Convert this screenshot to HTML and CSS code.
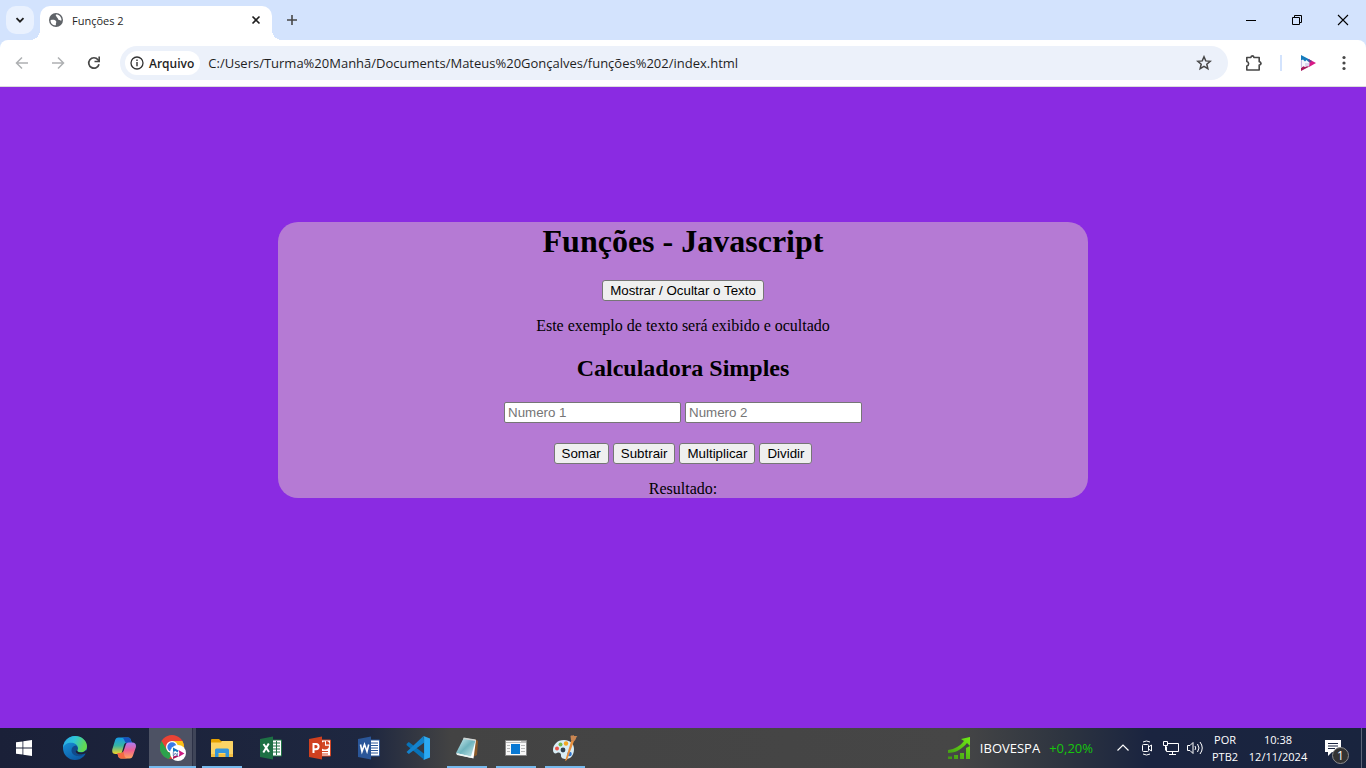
FILE: index.html
```html
<!DOCTYPE html>
<html lang="pt-BR">
<head>
<meta charset="utf-8">
<title>Funções 2</title>
<link rel="stylesheet" href="styles.css">
</head>
<body>
<header class="browser">
  <div class="tabstrip">
    <button class="tab-search" aria-label="Pesquisar guias"><svg width="10" height="10" viewBox="0 0 10 10"><path d="M1.5 3.2 5 6.7 8.500 3.200" fill="none" stroke="#1f1f1f" stroke-width="1.800"/></svg></button>
    <div class="tab">
      <svg width="16" height="16" viewBox="0 0 16 16"><circle cx="8" cy="8" r="7" fill="#5f6368"/><path d="M2.500 8.200c2-.6 4.500-.5 5.500.8s-.7 2.200 0 4.300c-3 .4-5.500-2-5.500-5.100zM8 2.600c-.9 1.700 1 1.700 1 3.200 1.400.1.300 2.300 2.500 2.100 1 .1 1.200 1 2 .6.300-3.200-2.400-6-5.500-5.900z" fill="#fff"/></svg>
      <span class="tab-title">Funções 2</span>
      <button class="tab-close" aria-label="Fechar guia"><svg width="10" height="10" viewBox="0 0 10 10"><path d="m1.500 1.500 7 7m0-7-7 7" stroke="#1f1f1f" stroke-width="1.600"/></svg></button>
    </div>
    <button class="tab-new" aria-label="Nova guia"><svg width="12" height="12" viewBox="0 0 12 12"><path d="M6 1v10M1 6h10" stroke="#474747" stroke-width="1.600"/></svg></button>
    <div class="window-controls">
      <button aria-label="Minimizar"><svg width="12" height="12" viewBox="0 0 12 12"><path d="M1 6.500h10" stroke="#000"/></svg></button>
      <button aria-label="Restaurar"><svg width="12" height="12" viewBox="0 0 12 12"><path d="M1.500 3.500h7v7h-7zM3.500 3.500v-2h7v7h-2" fill="none" stroke="#000"/></svg></button>
      <button aria-label="Fechar"><svg width="12" height="12" viewBox="0 0 12 12"><path d="m1 1 10 10M11 1 1 11" stroke="#000" stroke-width="1.100"/></svg></button>
    </div>
  </div>
  <div class="toolbar">
    <div class="nav">
      <button aria-label="Voltar" disabled><svg width="16" height="16" viewBox="0 0 16 16"><path d="M14 8H3m5-5.500L2.500 8 8 13.500" fill="none" stroke="#aeb0b2" stroke-width="1.500"/></svg></button>
      <button aria-label="Avançar" disabled><svg width="16" height="16" viewBox="0 0 16 16"><path d="M2 8h11M8 2.500 13.500 8 8 13.500" fill="none" stroke="#aeb0b2" stroke-width="1.500"/></svg></button>
      <button aria-label="Recarregar"><svg width="16" height="16" viewBox="0 0 16 16"><path d="M13 9.200A5.200 5.200 0 1 1 12 4.700l1 1.300" fill="none" stroke="#474747" stroke-width="1.700"/><path d="M14 1.500v5.800H8.500V5.800h3.900V1.500z" fill="#474747"/></svg></button>
    </div>
    <div class="omnibox">
      <button class="chip"><svg width="14" height="14" viewBox="0 0 14 14"><circle cx="7" cy="7" r="6" fill="none" stroke="#333" stroke-width="1.300"/><path d="M7 6v4.200M7 3.400v1.500" stroke="#333" stroke-width="1.400"/></svg>Arquivo</button>
      <input class="url" type="text" aria-label="Endereço" value="C:/Users/Turma%20Manhã/Documents/Mateus%20Gonçalves/funções%202/index.html">
      <button class="star" aria-label="Favoritar"><svg width="16" height="16" viewBox="0 0 16 16"><path d="m8 1.800 1.750 4.100 4.450.4-3.400 2.950 1.050 4.400L8 11.300l-3.850 2.350 1.050-4.400L1.800 6.300l4.450-.4z" fill="none" stroke="#474747" stroke-width="1.500"/></svg></button>
    </div>
    <div class="actions">
      <button aria-label="Extensões"><svg width="18" height="18" viewBox="0 0 18 18"><path d="M1.800 3.500h4.100a1.500 1.500 0 0 1 3 0h5.300v4.300a1.600 1.600 0 0 1 0 3.200v5H1.800v-4a2.300 2.300 0 0 0 0-4.500z" fill="none" stroke="#474747" stroke-width="1.600" stroke-linejoin="round"/><path d="M6 2.500a1.600 1.600 0 0 1 3.100 0zM15 7.800a1.600 1.600 0 0 1 0 3.200z" fill="#474747"/></svg></button>
      <span class="divider"></span>
      <button aria-label="Perfil"><svg width="18" height="18" viewBox="0 0 18 18"><path d="M2 1.500 16.500 9 2 17z" fill="#f4f6fc"/><path d="M2 1 10.500 5.400 9.500 8 7.500 6 6 7.500 4 5.500 2 6.500z" fill="#157bbd"/><path d="m2 17 8.500-4.400-2.500-.4-2 .8-1.500-.8-2.500 1.800z" fill="#a8165e"/><path d="m10 5.200 7 3.800-7 4 .5-4z" fill="#d71a86"/><path d="m9.500 5 3.500 1.900-2 1.600-1.500-.5z" fill="#674096"/><path d="M2.400 6.500v7M7 9v3M9 9v3" stroke="#b89edb" stroke-width=".8"/></svg></button>
      <button aria-label="Menu"><svg width="16" height="16" viewBox="0 0 16 16" fill="#474747"><circle cx="8" cy="2.500" r="1.600"/><circle cx="8" cy="8" r="1.600"/><circle cx="8" cy="13.500" r="1.600"/></svg></button>
    </div>
  </div>
</header>

<main class="page">
  <section class="card">
    <h1>Funções - Javascript</h1>
    <button class="btn">Mostrar / Ocultar o Texto</button>
    <p>Este exemplo de texto será exibido e ocultado</p>
    <h2>Calculadora Simples</h2>
    <div class="row">
      <input class="num" type="number" placeholder="Numero 1" aria-label="Numero 1">
      <input class="num" type="number" placeholder="Numero 2" aria-label="Numero 2">
    </div>
    <div class="row ops">
      <button class="btn">Somar</button>
      <button class="btn">Subtrair</button>
      <button class="btn">Multiplicar</button>
      <button class="btn">Dividir</button>
    </div>
    <p>Resultado:</p>
  </section>
</main>

<footer class="taskbar">
  <button class="start" aria-label="Iniciar"><svg width="16" height="16" viewBox="0 0 16 16" fill="#fff"><path d="M0 2.300 6.500 1.400v6.200H0zM7.300 1.200 16 0v7.600H7.300zM0 8.400h6.500v6.200L0 13.700zM7.300 8.400H16V16l-8.700-1.200z"/></svg></button>
  <nav class="apps">
    <button aria-label="Edge"><svg width="24" height="24" viewBox="0 0 24 24">
      <defs><linearGradient id="e1" x2="1" y2=".3"><stop stop-color="#2aa5e8"/><stop offset=".5" stop-color="#2fc5d8"/><stop offset="1" stop-color="#62d950"/></linearGradient><linearGradient id="e2" x2=".6" y2="1"><stop stop-color="#1b9de2"/><stop offset="1" stop-color="#0c59a4"/></linearGradient></defs>
      <circle cx="12" cy="12" r="12" fill="url(#e2)"/>
      <path d="M0 12C.5 5 5.500 0 12 0c7 0 12 5 12 10.300 0 4-3 6-6.300 6-2.700 0-3.900-1-3.500-2 .6-1 1-1.600.8-2.800C14.400 8.400 11.500 6.700 8 6.700c-4 0-7 2-8 5.300z" fill="url(#e1)"/>
      <path d="M8.500 14.500c0-3 1.800-4.900 4.500-5.100 1.300.8 2 2.400 1.800 3.600-.2.900-.9 1.100-.6 1.900.6 1.400 3.500 2.300 6.500 1.300l2-.8c.5 0 .5.500.2 1-2 3-5.200 4-8 3.700-3.800-.3-6.400-2.700-6.400-5.600z" fill="#114a8b"/>
      <path d="M14.200 14.300c-.2 1.500 2 2.400 4.300 2.100 2.200-.2 3.700-1.200 4.800-2.700l.7 1.600c-.2 1-.8 1.700-1.400 2.600-.7-.7-1.700-.1-2.900.2-3.500.9-7-.6-7-3.200z" fill="#1c2238"/>
    </svg></button>
    <button aria-label="Copilot"><svg width="24" height="24" viewBox="0 0 24 24">
      <defs><linearGradient id="c1" x2="0" y2="1"><stop stop-color="#159be9"/><stop offset=".5" stop-color="#38b5a2"/><stop offset="1" stop-color="#f3d625"/></linearGradient><linearGradient id="c2" x2="0" y2="1"><stop stop-color="#a97bf4"/><stop offset=".5" stop-color="#ee6090"/><stop offset="1" stop-color="#ffa75b"/></linearGradient></defs>
      <path d="M6.500 1.500H16c1.800 0 2.500 1 3 3L20 7h-5.500c-1.500 0-2 .6-2.500 2l-2 7c-.6 1.500-1.300 2-3 2H3.500C.8 18-.3 16 .4 13L3 4.500c.6-2 1.500-3 3.500-3z" fill="url(#c1)"/>
      <path d="M13 1.500h3c1.800 0 2.500 1 3 3L20 7h-5.500c-2 0-2-5.500-5-5.500z" fill="#1752bf"/>
      <path d="M17.500 22.500H9.200c-2 0-2.700-1-3.200-3L5.300 17H9c1.800 0 2.300-1 2.800-2.500l2-6c.5-1.300 1.200-2 2.700-2h4c2.700 0 4 2 3.300 5L21 19.500c-.6 2-1.500 3-3.500 3z" fill="url(#c2)"/>
      <path d="M5.300 17H9c1.800 0 2.300-1 2.800-2.500-.2 5 1.200 8 4 8H9.200c-2 0-2.700-1-3.200-3z" fill="#f36b42"/>
    </svg></button>
    <button class="active" aria-label="Chrome"><svg width="26" height="26" viewBox="0 0 26 26">
      <circle cx="12" cy="12" r="12" fill="#ea4335"/><path d="M1.600 6 6.800 15a6 6 0 0 0 6 3l-4 6A12 12 0 0 1 1.600 6z" fill="#2ca24c"/><path d="M12 6h10.400A12 12 0 0 1 12 24l5.200-9z" fill="#fbc116"/><circle cx="12" cy="12" r="6" fill="#fff"/><circle cx="12" cy="12" r="4.700" fill="#397be8"/>
      <circle cx="18" cy="18" r="8" fill="#fff"/><path d="m13 12.500 5.500 3-1 2-2-1.500-2.500 1z" fill="#1478bb"/><path d="m18.500 15 6 3.500-6 3.500 1-3.500z" fill="#cb1b81"/><path d="m13 24 5.500-2.500-2-1-3.500 1z" fill="#a9145d"/><path d="M13.300 17v4l2-3 2 3v-3" fill="none" stroke="#536fae" stroke-width=".8"/>
    </svg></button>
    <button class="open" aria-label="Explorador"><svg width="24" height="24" viewBox="0 0 24 24"><path d="M1 5V4q0-1 1-1h7l2 2h11q1 0 1 1v4H1z" fill="#e5a000"/><path d="M1 6.500h10l1-1.500h10q1 0 1 1v15H1z" fill="#fbd365"/><path d="M1 18h22v3H1z" fill="#f3bd42"/><path d="M5 21v-7q0-1.500 1.500-1.500h11q1.500 0 1.500 1.500v7h-3.500v-4h-7v4z" fill="#3595dc"/></svg></button>
    <button aria-label="Excel"><svg width="24" height="24" viewBox="0 0 24 24"><path d="M12 4h10.500v16H12z" fill="#fff" stroke="#217346"/><path d="M14 7h7m-7 3h7m-7 3h7m-7 3h7M17.500 5v14" stroke="#217346"/><path d="m1 3 13-2.500v23L1 21z" fill="#1d7044"/><path d="M4.500 8 10 16M9.800 7.500l-5.500 9" stroke="#fff" stroke-width="2"/></svg></button>
    <button aria-label="PowerPoint"><svg width="24" height="24" viewBox="0 0 24 24"><path d="M12 4h10.500v16H12z" fill="#fff" stroke="#d24726"/><path d="M14 15.500h6M14 18h6" stroke="#d24726"/><path d="M17 5.500v4.200h4a4 4 0 1 1-4-4.200z" fill="#d24726"/><path d="M18 5v3.500h3.500A3.500 3.500 0 0 0 18 5z" fill="#d24726"/><path d="m1 3 13-2.500v23L1 21z" fill="#d0401f"/><path d="M5.500 17V8H8a2.500 2.500 0 0 1 0 5.200H5.500" fill="none" stroke="#fff" stroke-width="2"/></svg></button>
    <button aria-label="Word"><svg width="24" height="24" viewBox="0 0 24 24"><path d="M12 4h10.500v16H12z" fill="#fff" stroke="#2b579a"/><path d="M14 7h7m-7 2.500h7M14 12h7m-7 2.500h7M14 17h7" stroke="#2b579a"/><path d="m1 3 13-2.500v23L1 21z" fill="#2a5699"/><path d="m3.500 8.500 1.500 7 2.500-7 2.500 7 1.700-7" fill="none" stroke="#fff" stroke-width="1.600"/></svg></button>
    <button aria-label="VS Code"><svg width="24" height="24" viewBox="0 0 24 24"><path d="m.5 8 2.300-2 15.700 12v6L.7 9.200z" fill="#0873b9"/><path d="M.5 16 17.500 0l.8 6.500L2.800 18z" fill="#1382cd"/><path d="M17.500 0 24 2.600v18.800L17.500 24l.6-1.700V1.800z" fill="#2ba9f2"/></svg></button>
    <button class="open" aria-label="Bloco de Notas"><svg width="24" height="24" viewBox="0 0 24 24"><defs><linearGradient id="n1" x2="1" y2="1"><stop stop-color="#d6f1f3"/><stop offset=".5" stop-color="#6eb3bd"/><stop offset="1" stop-color="#c8e9eb"/></linearGradient></defs><path d="m20 3 3 2-1 14-4 2z" fill="#8a5a2a"/><path d="m9 2 12 2-2.500 18.500L2 18.500z" fill="#fff"/><path d="m8.500 2.500 12 2L16 20.500 1 17z" fill="url(#n1)"/><path d="m8.700 1.500 12 2-.4 1.500-12-2z" fill="#cdd3d2"/><path d="m1 17 15 3.500.5 1.500L2 19z" fill="#edf4f3"/></svg></button>
    <button class="open" aria-label="Aplicativo"><svg width="22" height="18" viewBox="0 0 22 18"><path d="M.5 1.500h21v15H.5z" fill="#f8f8f8" stroke="#858585"/><path d="M1 2h20v2H1z" fill="#bbb"/><path d="M1 2h15v1H1z" fill="#f5f5f5"/><path d="M6 5h9v10H6z" fill="#0878d3"/><path d="M2 6.500h3M2 9.500h3M2 12.500h3M16 6.500h4M16 9.500h4M16 12.500h4" stroke="#b9b9b9"/></svg></button>
    <button class="open" aria-label="Paint"><svg width="26" height="26" viewBox="0 0 26 26"><path d="M12 5C5 5 1 10 1 15c0 3 2 4 4 3s4 0 4 2c-.3 3 2 4 5 4 5 0 8-4 8-10 0-5.500-4-9-10-9z" fill="#d8edf5"/><circle cx="5" cy="13.500" r="2" fill="#ed5246"/><circle cx="8.500" cy="9.500" r="2" fill="#75b84c"/><circle cx="14" cy="8.500" r="2.200" fill="#f4a720"/><circle cx="11" cy="15" r="2.400" fill="#31424e"/><circle cx="17.500" cy="19" r="2.300" fill="#3276cf"/><path d="m19.500 5 2.500 1-7 19-2 1z" fill="#e88f3c"/><path d="M18.500 1c1-1 2 0 3-1 .3 1.500 2.500 1 4 1-2 1.500-1 4-4 5.500l-2.500-1.500z" fill="#c98652"/></svg></button>
  </nav>
  <button class="stock">
    <svg width="24" height="24" viewBox="0 0 24 24"><defs><linearGradient id="s1" x1="0" y1="1" x2="1" y2="0"><stop stop-color="#3f9314"/><stop offset="1" stop-color="#70ed16"/></linearGradient></defs><path d="M1 20.500h4V23H1zM7 19h4v4H7zM13 17h4v6h-4zM19 12l4-2v13h-4zM1 14c7-1 12-4 16-9l-3-2 9-2v9l-3-3C15 13 9 17 1 17z" fill="url(#s1)"/></svg>
    <span>IBOVESPA</span><span class="up">+0,20%</span>
  </button>
  <div class="tray">
    <button aria-label="Ícones ocultos"><svg width="14" height="14" viewBox="0 0 14 14"><path d="m1.500 9.500 5.500-5.500 5.500 5.500" fill="none" stroke="#fff" stroke-width="1.200"/></svg></button>
    <button aria-label="Reunir agora"><svg width="14" height="16" viewBox="0 0 14 16" fill="none" stroke="#fff"><rect x="2.500" y="4.500" width="6" height="7" rx="1"/><path d="m8.500 7 3-2v6l-3-2M3 2q3.500-2 7 0M3 14q3.500 2 7 0"/></svg></button>
    <button aria-label="Rede"><svg width="18" height="16" viewBox="0 0 18 16" fill="none" stroke="#fff"><path d="M5.500 3.500h11v8h-12v-5M10.500 11.500v3M7 14.500h7M1.500 1.500h4v4h-4zM3.500 5.500v5"/></svg></button>
    <button aria-label="Volume"><svg width="18" height="16" viewBox="0 0 18 16" fill="none" stroke="#fff"><path d="M1.500 5.500h2.500l3-3v11l-3-3H1.500zM9 6q1.500 2 0 4M11.500 4q3 4 0 8M14 2q4.500 6 0 12"/></svg></button>
  </div>
  <button class="lang"><span>POR</span><span>PTB2</span></button>
  <button class="clock"><time>10:38</time><time>12/11/2024</time></button>
  <button class="notify" aria-label="Notificações"><svg width="18" height="18" viewBox="0 0 18 18"><path d="M1 1h16v12H8l-4 4v-4H1z" fill="#fff"/><path d="M4 4.500h10M4 7h10M4 9.500h7" stroke="#1b2540"/></svg><span class="badge">1</span></button>
  <button class="desktop" aria-label="Mostrar área de trabalho"></button>
</footer>
</body>
</html>
```
FILE: styles.css
```css
* { box-sizing: border-box; }

body {
  margin: 0;
  min-height: 100vh;
  display: flex;
  flex-direction: column;
  font-family: "Open Sans", "Noto Sans", sans-serif;
  background: #8a2be2;
}

svg { display: block; flex: none; }

h1, h2, p { margin: 0; }

.browser button,
.taskbar button {
  display: flex;
  align-items: center;
  justify-content: center;
  padding: 0;
  border: 0;
  background: none;
  font-family: inherit;
}

/* Tab strip */
.browser { background: #d3e3fd; }

.tabstrip {
  display: flex;
  align-items: center;
  height: 40px;
  padding-left: 6px;
}

.browser .tab-search {
  width: 28px;
  height: 28px;
  margin-right: 6px;
  border-radius: 10px;
  background: #e9f1fe;
}

.tab {
  position: relative;
  display: flex;
  align-items: center;
  align-self: flex-end;
  gap: 8px;
  width: 232px;
  height: 34px;
  padding: 0 8px 6px;
  border-radius: 10px 10px 0 0;
  background: #fff;
}

.tab::before,
.tab::after {
  content: "";
  position: absolute;
  bottom: 0;
  width: 10px;
  height: 10px;
}

.tab::before { right: 100%; background: radial-gradient(circle at 0 0, transparent 10px, #fff 10px); }
.tab::after { left: 100%; background: radial-gradient(circle at 100% 0, transparent 10px, #fff 10px); }

.tab-title { flex: 1; font-size: 11px; color: #1f1f1f; }

.browser .tab-close { width: 16px; height: 16px; }
.browser .tab-new { width: 28px; height: 28px; margin-left: 6px; }

.window-controls { display: flex; height: 100%; margin-left: auto; }
.window-controls button { width: 46px; }

/* Toolbar */
.toolbar {
  display: flex;
  align-items: center;
  height: 47px;
  padding: 0 4px;
  border-bottom: 1px solid #dcdcdc;
  border-radius: 8px 8px 0 0;
  background: #fff;
}

.nav { display: flex; margin-right: 8px; }
.nav button { width: 36px; height: 34px; }

.omnibox {
  flex: 1;
  display: flex;
  align-items: center;
  height: 34px;
  padding: 0 8px 0 5px;
  border-radius: 17px;
  background: #ecf1fa;
}

.browser .chip {
  gap: 5px;
  height: 24px;
  padding: 0 6px 0 5px;
  border-radius: 12px;
  background: #fff;
  font-size: 12px;
  font-weight: 600;
  color: #1f1f1f;
}

.url {
  flex: 1;
  min-width: 0;
  padding: 0 8px;
  border: 0;
  background: none;
  font: 13px "Open Sans", "Noto Sans", sans-serif;
  color: #1f1f1f;
}

.browser .star { width: 32px; height: 32px; }

.actions { display: flex; align-items: center; margin-left: 8px; }
.actions button { width: 36px; height: 34px; }
.actions .divider { width: 2px; height: 16px; margin: 0 8px; background: #d3e3fd; }

/* Page content */
.page {
  flex: 1;
  padding: 135px 8px 0;
  font-family: "Liberation Serif", "Times New Roman", serif;
  color: #000;
}

.card {
  display: flex;
  flex-direction: column;
  align-items: center;
  width: 60%;
  margin: 0 auto;
  border-radius: 20px;
  background: #b57ad4;
}

.card h1 { font-size: 32px; line-height: 38px; margin-bottom: 20px; }
.card h2 { font-size: 24px; line-height: 27px; margin: 20px 0; }
.card p { font-size: 16px; line-height: 18px; margin-top: 16px; }

.row { display: flex; justify-content: center; gap: 4px; }
.ops { margin-top: 20px; }

.btn {
  height: 21px;
  padding: 0 7px;
  border: 1px solid #767676;
  border-radius: 3px;
  background: #efefef;
  font-family: "Liberation Sans", Arial, sans-serif;
  color: #000;
}

.num {
  width: 177px;
  height: 21px;
  padding: 1px 3px;
  border: 1px solid #767676;
  border-radius: 2px;
  background: #fff;
  font-family: "Liberation Sans", Arial, sans-serif;
}

.num::placeholder { color: #757575; }

/* Taskbar */
.taskbar {
  display: flex;
  align-items: stretch;
  height: 40px;
  background: linear-gradient(90deg, #1a2038 0%, #1e2740 27%, #434343 33%, #464646 70%, #2d3440 78%, #1a2440 84%, #19243e 100%);
  color: #fff;
}

.taskbar .start { width: 48px; margin-right: 2px; }

.apps { display: flex; }
.apps button { position: relative; width: 49px; }

.apps .active { background: linear-gradient(90deg, transparent 1px, #4d5264 1px 44px, #2c3146 44px 45px, #3f4558 45px 48px, transparent 48px); }

.apps .open::after,
.apps .active::after {
  content: "";
  position: absolute;
  right: 4px;
  bottom: 0;
  left: 5px;
  height: 2px;
  background: #76b9ed;
}

.apps .active::after { right: 1px; left: 1px; }

.taskbar .stock {
  gap: 9px;
  margin-left: auto;
  margin-right: 18px;
  font-size: 13px;
  color: #fff;
}

.stock .up { color: #16c60c; }

.tray { display: flex; }
.tray button { width: 24px; }

.taskbar .lang,
.taskbar .clock {
  flex-direction: column;
  font-size: 11px;
  line-height: 17px;
  color: #fff;
}

.taskbar .lang { width: 36px; }
.taskbar .clock { width: 70px; }

.taskbar .notify { position: relative; width: 40px; }

.badge {
  position: absolute;
  right: 4px;
  bottom: 4px;
  width: 17px;
  height: 17px;
  border: 1px solid #8c8c8c;
  border-radius: 50%;
  background: #333;
  font-size: 12px;
  line-height: 15px;
  text-align: center;
  color: #fff;
}

.taskbar .desktop { width: 5px; margin-left: 8px; border-left: 1px solid #5d6478; }
```
